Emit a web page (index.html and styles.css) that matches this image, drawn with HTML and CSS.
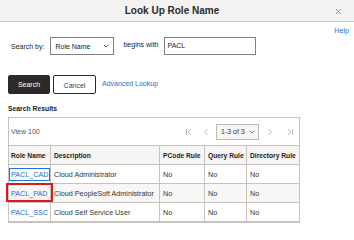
FILE: index.html
```html
<!DOCTYPE html>
<html lang="en">
<head>
<meta charset="utf-8">
<title>Look Up Role Name</title>
<link rel="stylesheet" href="styles.css">
</head>
<body>
<div class="dialog">
  <header class="titlebar">
    <h1 class="title">Look Up Role Name</h1>
    <button class="close" aria-label="Close">
      <svg width="7" height="7" viewBox="0 0 7 7"><path d="M1 1L6 6M6 1L1 6" stroke="#8a8a8a" stroke-width="0.9" fill="none"/></svg>
    </button>
  </header>
  <main class="content">
    <div class="help-row"><a class="help" href="#">Help</a></div>
    <div class="search-row">
      <span class="label">Search by:</span>
      <div class="select">
        <span>Role Name</span>
        <svg width="6" height="4" viewBox="0 0 6 4"><path d="M0.8 0.8L3 3L5.2 0.8" stroke="#555" stroke-width="0.9" fill="none"/></svg>
      </div>
      <span class="label begins">begins with</span>
      <div class="input">PACL</div>
    </div>
    <div class="button-row">
      <button class="btn primary">Search</button>
      <button class="btn secondary">Cancel</button>
      <a class="adv" href="#">Advanced Lookup</a>
    </div>
    <div class="results-label">Search Results</div>
    <div class="grid">
      <div class="toolbar">
        <span class="view">View 100</span>
        <div class="pager">
          <span class="pi first"><svg width="8" height="8" viewBox="0 0 8 8"><path d="M1.5 1V7M6 1L3 4L6 7" stroke="#b3b3b3" stroke-width="0.9" fill="none"/></svg></span>
          <span class="pi prev"><svg width="8" height="8" viewBox="0 0 8 8"><path d="M5.5 1L2.5 4L5.5 7" stroke="#b3b3b3" stroke-width="0.9" fill="none"/></svg></span>
          <div class="pagesel">
            <span>1-3 of 3</span>
            <svg width="6" height="4" viewBox="0 0 6 4"><path d="M0.8 0.8L3 3L5.2 0.8" stroke="#777" stroke-width="0.9" fill="none"/></svg>
          </div>
          <span class="pi next"><svg width="8" height="8" viewBox="0 0 8 8"><path d="M2.5 1L5.5 4L2.5 7" stroke="#b3b3b3" stroke-width="0.9" fill="none"/></svg></span>
          <span class="pi last"><svg width="8" height="8" viewBox="0 0 8 8"><path d="M2 1L5 4L2 7M6.5 1V7" stroke="#b3b3b3" stroke-width="0.9" fill="none"/></svg></span>
        </div>
      </div>
      <table class="results">
        <colgroup>
          <col class="c1"><col class="c2"><col class="c3"><col class="c4"><col class="c5">
        </colgroup>
        <thead>
          <tr><th>Role Name</th><th>Description</th><th>PCode Rule</th><th>Query Rule</th><th>Directory Rule</th></tr>
        </thead>
        <tbody>
          <tr><td><a class="focus" href="#">PACL_CAD</a></td><td>Cloud Administrator</td><td>No</td><td>No</td><td>No</td></tr>
          <tr class="alt"><td class="marked"><a href="#">PACL_PAD</a></td><td>Cloud PeopleSoft Administrator</td><td>No</td><td>No</td><td>No</td></tr>
          <tr><td><a href="#">PACL_SSC</a></td><td>Cloud Self Service User</td><td>No</td><td>No</td><td>No</td></tr>
        </tbody>
      </table>
    </div>
  </main>
</div>
</body>
</html>
```

FILE: styles.css
```css
* { box-sizing: border-box; }
html, body { margin: 0; padding: 0; background: #fff; }
body {
  font-family: "Liberation Sans", Arial, sans-serif;
  font-size: 7px;
  color: #333;
  width: 354px;
  height: 231px;
  overflow: hidden;
}
a { text-decoration: none; color: #1a6fcf; }
button { font-family: inherit; }

.titlebar {
  height: 22px;
  background: #f4f3f1;
  border-bottom: 1px solid #cfccc8;
  display: flex;
  align-items: center;
  justify-content: center;
  position: relative;
  padding-right: 10px;
}
.title {
  margin: 0;
  font-size: 10px;
  font-weight: bold;
  color: #2a2a2a;
  line-height: 21px;
}
.close {
  position: absolute;
  right: 12px;
  top: 7px;
  width: 8px;
  height: 8px;
  padding: 0;
  border: 0;
  background: transparent;
  display: flex;
  align-items: center;
  justify-content: center;
}

.content { padding: 0 5px 0 8px; }

.help-row {
  margin-top: 4px;
  height: 9px;
  line-height: 9px;
  text-align: right;
}
.help { color: #1a73d0; font-size: 7.2px; }

.search-row {
  margin-top: 2px;
  height: 18px;
  display: flex;
  align-items: center;
  padding-left: 3px;
}
.label { color: #222; margin-right: 6px; }
.label.begins { margin-left: 9px; margin-right: 5px; margin-top: -3px; }
.select {
  width: 64px;
  height: 18px;
  border: 1px solid #7f7f7f;
  display: flex;
  align-items: center;
  justify-content: space-between;
  padding: 0 4px 0 4px;
  color: #222;
}
.input {
  width: 92px;
  height: 18px;
  border: 1px solid #7f7f7f;
  padding: 0 3px;
  line-height: 16px;
  color: #222;
}

.button-row {
  margin-top: 20px;
  display: flex;
  align-items: center;
  height: 19px;
}
.btn {
  height: 19px;
  padding: 0;
  font-size: 7px;
  border-radius: 2px;
}
.btn.primary {
  width: 42px;
  background: #2d2926;
  border: 1px solid #2d2926;
  color: #fff;
}
.btn.secondary {
  width: 43px;
  margin-left: 3px;
  background: #fff;
  border: 1px solid #2d2926;
  color: #2a4866;
  padding-top: 2px;
}
.adv { margin-left: 6px; margin-top: -3px; color: #1a6fcf; }

.results-label {
  margin-top: 10px;
  height: 9px;
  line-height: 9px;
  font-weight: bold;
  font-size: 6.8px;
  color: #222;
}

.grid {
  margin-top: 4px;
  width: 292px;
  border: 1px solid #c6c3bf;
  border-bottom: 2px solid #c6c3bf;
}
.toolbar {
  height: 27px;
  display: flex;
  align-items: center;
  padding-left: 2px;
}
.view { color: #555; }
.pager {
  margin-left: auto;
  display: flex;
  align-items: center;
  padding-right: 5px;
}
.pi {
  width: 8px;
  height: 8px;
  display: flex;
}
.pi.prev { margin-left: 9px; }
.pagesel {
  margin-left: 6px;
  width: 43px;
  height: 16px;
  border: 1px solid #bdbab6;
  background: #f7f6f5;
  display: flex;
  align-items: center;
  justify-content: space-between;
  padding: 0 3px 0 4px;
  color: #333;
}
.pi.next { margin-left: 7px; }
.pi.last { margin-left: 12px; }

.results {
  width: 290px;
  border-collapse: separate;
  border-spacing: 0;
  table-layout: fixed;
}
.c1 { width: 41px; }
.c2 { width: 109px; }
.c3 { width: 45px; }
.c4 { width: 42px; }
.c5 { width: 53px; }
.results th, .results td {
  height: 19px;
  border-top: 1px solid #c6c3bf;
  border-left: 1px solid #c6c3bf;
  padding: 0 0 0 3px;
  text-align: left;
  white-space: nowrap;
  overflow: visible;
}
.results th:first-child, .results td:first-child { border-left: 0; padding-left: 2px; }
.results th {
  font-weight: bold;
  font-size: 6.7px;
  color: #222;
  background: #f6f5f3;
}
.results td { color: #333; background: #fff; font-size: 7.2px; }
.results tr.alt td { background: #f8f7f6; }
.results td a { color: #1a6fcf; }
.focus { outline: 1px solid #1a73e0; outline-offset: 1px; }
.marked { position: relative; }
.marked::after {
  content: "";
  position: absolute;
  left: -3px;
  right: -3px;
  top: -1px;
  bottom: 0px;
  border: 2px solid #e3141c;
}
```
